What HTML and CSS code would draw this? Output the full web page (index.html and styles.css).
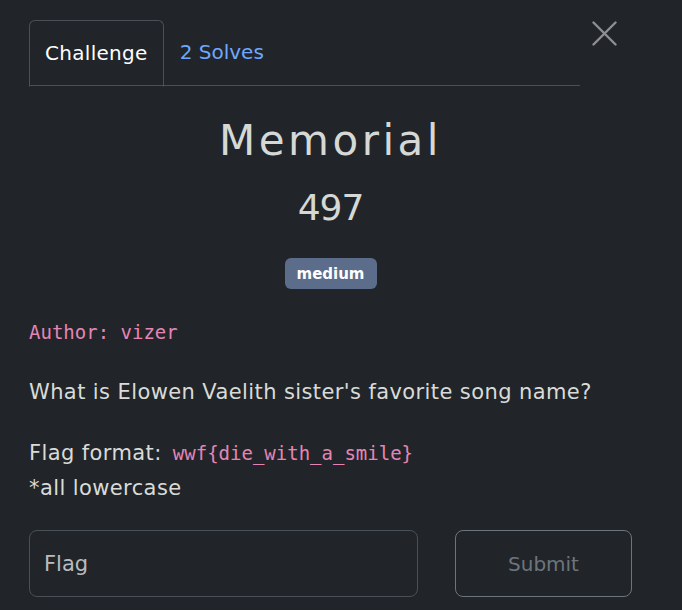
FILE: index.html
```html
<!DOCTYPE html>
<html>
<head>
<meta charset="utf-8">
<link rel="stylesheet" href="styles.css">
</head>
<body>
<div class="modal">
  <div class="header">
    <div class="tabs">
      <div class="tab active">Challenge</div>
      <div class="tab link">2 Solves</div>
    </div>
    <button class="close" aria-label="Close">
      <svg width="25" height="25" viewBox="0 0 25 25"><path d="M1.5 1.5 L23.5 23.5 M23.5 1.5 L1.5 23.5" stroke="#8d8f92" stroke-width="2.4" stroke-linecap="round"/></svg>
    </button>
  </div>
  <h1 class="title">Memorial</h1>
  <h2 class="points">497</h2>
  <div class="tags"><span class="badge">medium</span></div>
  <div class="desc">
    <p class="author"><code>Author: vizer</code></p>
    <p class="q">What is Elowen Vaelith sister's favorite song name?</p>
    <p class="fmt">Flag format: <code class="fmtcode">wwf{die_with_a_smile}</code><br>*all lowercase</p>
  </div>
  <div class="form">
    <input class="flag" type="text" placeholder="Flag">
    <button class="submit">Submit</button>
  </div>
</div>
</body>
</html>
```
FILE: styles.css
```css
html, body {
  margin: 0;
  background: #212529;
}
body {
  font-family: "DejaVu Sans", "Noto Sans", sans-serif;
  color: #d9dbd8;
}
.modal {
  padding: 20px 50px 0 29px;
}
.header {
  display: flex;
  align-items: flex-start;
}
.tabs {
  display: flex;
  width: 551px;
  border-bottom: 1px solid #495057;
  height: 65px;
}
.tab {
  font-size: 20px;
  padding: 20px 16px 0 16px;
  height: 45px;
  line-height: 24px;
  letter-spacing: 0.3px;
}
.tab.active {
  color: #ffffff;
  border: 1px solid #495057;
  border-bottom: 1px solid #212529;
  border-radius: 6px 6px 0 0;
  margin-bottom: -1px;
  padding: 20px 15px 0 15px;
}
.tab.link {
  color: #6ea8fe;
  letter-spacing: 0;
}
.close {
  margin-left: 12px;
  margin-top: 1px;
  background: none;
  border: 0;
  padding: 0;
  width: 25px;
  height: 25px;
}
.close svg {
  display: block;
}
.title {
  text-align: center;
  font-size: 42px;
  font-weight: 500;
  color: #d6d8d5;
  margin: 30px 0 0 0;
  line-height: 50px;
  letter-spacing: 3.5px;
}
.points {
  text-align: center;
  font-size: 36px;
  font-weight: 500;
  color: #d6d8d5;
  margin: 20px 0 0 0;
  line-height: 44px;
  letter-spacing: -1px;
}
.tags {
  text-align: center;
  margin-top: 28px;
}
.badge {
  display: inline-block;
  background: #5b6d8a;
  color: #ffffff;
  font-weight: 700;
  font-size: 15px;
  padding: 7px 12px 6px 12px;
  border-radius: 6px;
  line-height: 18px;
}
.desc {
  margin-top: 26px;
  font-size: 21px;
  letter-spacing: 0.4px;
}
.desc p {
  margin: 0 0 22px 0;
  line-height: 35px;
}
.desc p.author {
  margin-bottom: 25px;
}
.desc p.q {
  margin-bottom: 26px;
}
code {
  font-family: "DejaVu Sans Mono", monospace;
  font-size: 19px;
  color: #e685b5;
  letter-spacing: 0;
}
.fmtcode {
  margin-left: 4px;
}
.form {
  display: flex;
  gap: 37px;
  margin-top: 24px;
}
.flag {
  width: 389px;
  height: 67px;
  box-sizing: border-box;
  background: #212529;
  border: 1px solid #495057;
  border-radius: 8px;
  font-family: inherit;
  font-size: 21px;
  color: #dee2e6;
  padding: 0 14px;
}
.flag::placeholder {
  color: #b9bcbf;
}
.submit {
  width: 177px;
  height: 67px;
  background: transparent;
  border: 1px solid #6c757d;
  border-radius: 8px;
  font-family: inherit;
  font-size: 20px;
  color: #6c757d;
}
```
